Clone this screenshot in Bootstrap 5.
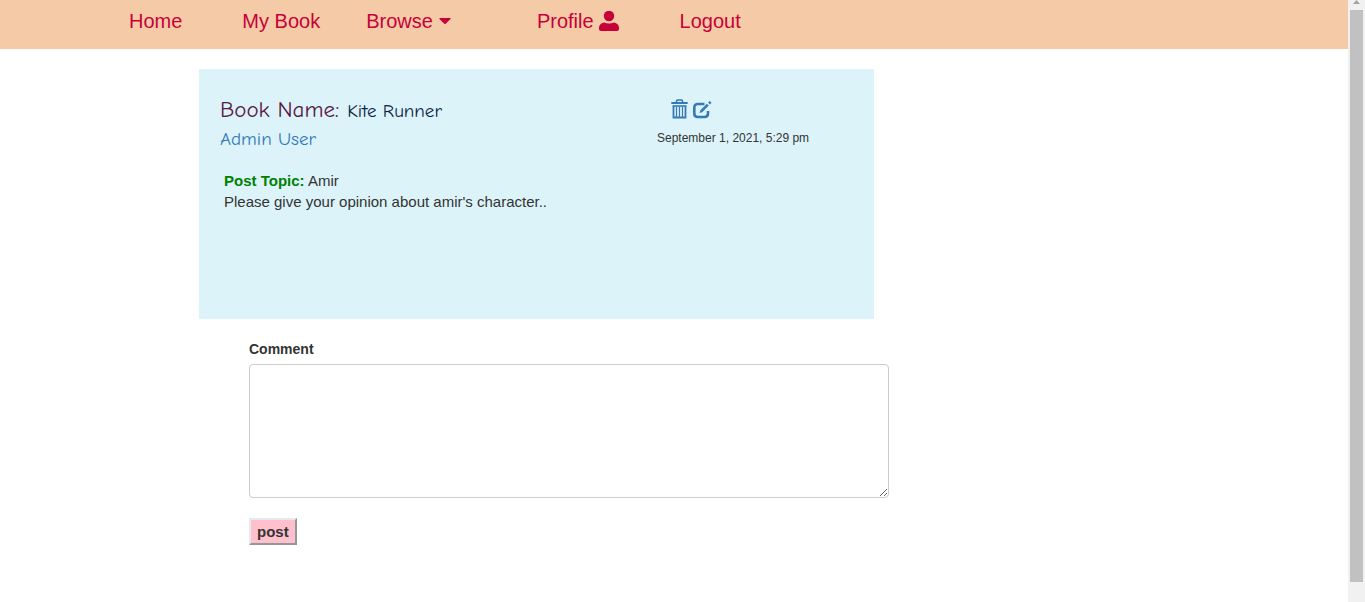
<!DOCTYPE html>
<html lang="en">
<head>
<meta charset="utf-8">
<meta name="viewport" content="width=device-width, initial-scale=1">
<title>My Book - Post</title>
<link href="https://cdn.jsdelivr.net/npm/bootstrap@5.3.0/dist/css/bootstrap.min.css" rel="stylesheet">
<style>
body { font-family: "Liberation Sans", Arial, sans-serif; font-size: 15px; line-height: 21px; color: #333; background: #fff; }
a { text-decoration: none; }
.site-nav { background: #f5cba7; padding: 9px 16px 16px 129px; font-size: 20px; line-height: 24px; }
.site-nav a { color: #c70039; }
.gap-wide { margin-right: 60px; }
.gap-narrow { margin-right: 46px; }
.gap-menu { margin-right: 84px; }
.content { padding: 20px 0 0 199px; }
.post-box { width: 675px; max-width: 100%; min-height: 250px; background: #dcf3fa; padding: 26px 21px; }
.post-meta { width: 196px; }
.comic { font-family: "Comic Sans MS", "Comic Neue", "Noto Sans", sans-serif; }
.book-label { font-size: 23px; line-height: 30px; color: #581845; }
.book-title { font-size: 19px; line-height: 30px; color: #0b2545; }
.author { font-size: 19px; line-height: 26px; }
.author, .tool { color: #337ab7; }
.tools { padding: 4px 14px 10px; }
.post-date { font-size: 12px; line-height: 18px; }
.post-body { padding: 18px 4px; }
.topic { color: green; }
.comment-form { width: 640px; max-width: 100%; margin-left: 50px; padding-top: 20px; }
.comment-form label { font-size: 14px; line-height: 20px; margin-bottom: 5px; }
.comment-box { height: 134px; border: 1px solid #ccc; border-radius: 4px; }
.post-btn { background: pink; border: 2px outset #e3e9ee; color: #333; padding: 1px 6px; line-height: 21px; font-weight: bold; margin-top: 20px; }
.scroll-track { width: 17px; background: #f1f1f1; }
.scroll-track svg { height: 10px; }
.scroll-thumb { width: 13px; background: #c1c1c1; margin-bottom: 20px; }
</style>
</head>
<body>
<div class="d-flex min-vh-100">
  <div class="flex-grow-1">
    <nav class="site-nav d-flex">
      <a href="#" class="gap-wide">Home</a>
      <a href="#" class="gap-narrow">My Book</a>
      <a href="#" class="gap-menu d-flex align-items-center">Browse
        <svg class="ms-1" width="16" height="12" viewBox="0 0 16 12" fill="currentColor" aria-hidden="true"><path d="M3 3h10q1.200 0 .5 1L8.700 8.700q-.7.600-1.400 0L2.500 4Q1.800 3 3 3z"/></svg></a>
      <a href="#" class="gap-wide d-flex align-items-center">Profile
        <svg class="ms-1" width="22" height="20" viewBox="0 0 22 20" fill="currentColor" aria-hidden="true"><circle cx="11" cy="5" r="5.200"/><path d="M6 11.500q5 2 10 0 5 1 5 5.500v1q0 2-2 2H3q-2 0-2-2v-1q0-4.500 5-5.500z"/></svg></a>
      <a href="#">Logout</a>
    </nav>
    <main class="content">
      <article class="post-box">
        <header class="d-flex justify-content-between">
          <div class="comic">
            <div class="d-flex align-items-baseline gap-2"><span class="book-label">Book Name:</span><span class="book-title">Kite Runner</span></div>
            <a href="#" class="author d-block">Admin User</a>
          </div>
          <div class="post-meta">
            <div class="tools d-flex gap-1">
              <a href="#" class="tool d-flex" aria-label="Delete"><svg width="17" height="20" viewBox="0 0 17 20" fill="none" stroke="currentColor"><path d="M5.500 3V2q0-1 1-1h4q1 0 1 1v1" stroke-width="1.600"/><path d="M.3 4h16.400" stroke-width="2"/><path d="M2.500 7v11.500h12V7" stroke-width="1.800"/><path d="M1.600 7h13.800" stroke-width="1.600"/><path d="M5.500 8v10M8.500 8v10M11.500 8v10" stroke-width="1.200"/></svg></a>
              <a href="#" class="tool d-flex" aria-label="Edit"><svg width="20" height="20" viewBox="0 0 20 20" fill="none" stroke="currentColor"><path d="M12.500 5H6Q2.300 5 2.300 8.500v6q0 3.500 3.700 3.500h6.500q3.500 0 3.500-3.500V12" stroke-width="2.600"/><path d="M9.500 12l6.300-6.300" stroke-width="2.600"/><path d="M7.500 14l1-3.200 2.200 2.200z" fill="currentColor" stroke="none"/><path d="M17 4.500l1.600-1.600" stroke-width="2.600"/></svg></a>
            </div>
            <time class="post-date d-block">September 1, 2021, 5:29 pm</time>
          </div>
        </header>
        <div class="post-body">
          <div><strong class="topic">Post Topic:</strong> Amir</div>
          <div>Please give your opinion about amir's character..</div>
        </div>
      </article>
      <form class="comment-form">
        <label for="comment" class="d-block fw-bold">Comment</label>
        <textarea id="comment" class="comment-box form-control"></textarea>
        <button type="button" class="post-btn">post</button>
      </form>
    </main>
  </div>
  <div class="scroll-track d-flex flex-column align-items-center flex-shrink-0" aria-hidden="true">
    <svg width="17" viewBox="0 0 17 10"><path d="M5 4l3.500-4L12 4z" fill="#a3a3a3"/></svg>
    <div class="scroll-thumb flex-grow-1"></div>
  </div>
</div>
<script src="https://cdn.jsdelivr.net/npm/bootstrap@5.3.0/dist/js/bootstrap.bundle.min.js"></script>
</body>
</html>
